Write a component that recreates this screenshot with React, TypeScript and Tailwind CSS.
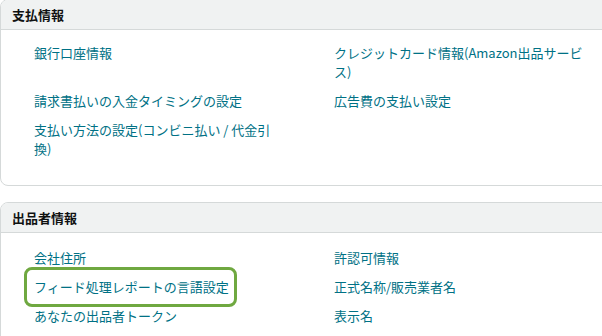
import React from "react";

const font = { fontFamily: '"Noto Sans CJK JP", "Noto Sans", sans-serif' };

type Item = { text: string; highlight?: boolean } | null;

function Panel({ title, items, first }: { title: string; items: Item[]; first?: boolean }) {
  return (
    <div
      className={
        "w-[640px] rounded-lg border border-[#d5d9d9] bg-white overflow-hidden " +
        (first ? "-mt-px" : "mt-4")
      }
    >
      <div className="h-[30px] bg-[#f0f2f2] border-b border-[#d5d9d9] pl-[11px] flex items-center">
        <span className="text-[13px] font-bold text-[#0f1111] leading-[19px]">{title}</span>
      </div>
      <div
        className={
          "grid grid-cols-[250px_250px] gap-x-[50px] gap-y-[10px] pl-[33px] " +
          (first ? "pt-[13px] pb-[27px]" : "pt-[15px] pb-[20px]")
        }
      >
        {items.map((it, i) =>
          it ? (
            <div key={i} className="relative text-[13px] leading-[19px] text-[#007185]">
              {it.highlight && (
                <div className="absolute -left-[10px] -top-[10px] w-[213px] h-[40px] rounded-lg border-[3px] border-[#6fa840]" />
              )}
              <span className="relative">{it.text}</span>
            </div>
          ) : (
            <div key={i} />
          )
        )}
      </div>
    </div>
  );
}

export default function App() {
  return (
    <div className="w-[602px] h-[336px] overflow-hidden bg-white" style={font}>
      <Panel
        first
        title="支払情報"
        items={[
          { text: "銀行口座情報" },
          { text: "クレジットカード情報(Amazon出品サービス)" },
          { text: "請求書払いの入金タイミングの設定" },
          { text: "広告費の支払い設定" },
          { text: "支払い方法の設定(コンビニ払い / 代金引換)" },
          null,
        ]}
      />
      <Panel
        title="出品者情報"
        items={[
          { text: "会社住所" },
          { text: "許認可情報" },
          { text: "フィード処理レポートの言語設定", highlight: true },
          { text: "正式名称/販売業者名" },
          { text: "あなたの出品者トークン" },
          { text: "表示名" },
        ]}
      />
    </div>
  );
}
